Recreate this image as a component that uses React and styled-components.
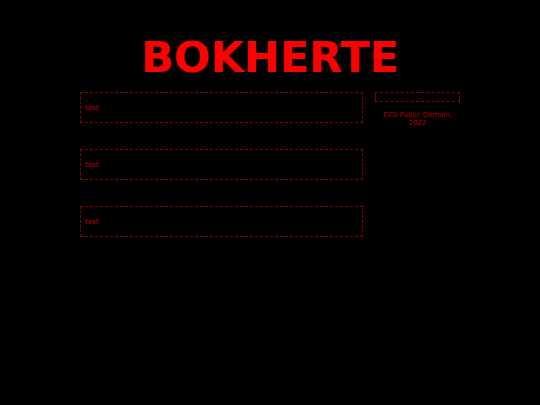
import React from 'react';
import styled, { createGlobalStyle } from 'styled-components';

const GlobalStyle = createGlobalStyle`
  html, body {
    margin: 0;
    padding: 0;
    background: #000;
    font-family: "DejaVu Sans", sans-serif;
  }
`;

const Page = styled.div`
  width: 540px;
  height: 405px;
  background: #000;
  display: flex;
  flex-direction: column;
  align-items: center;
`;

const Title = styled.h1`
  margin: 32px 0 0;
  font-family: "DejaVu Sans", sans-serif;
  font-weight: bold;
  font-size: 43px;
  line-height: 50px;
  color: #ff0000;
  letter-spacing: 0;
`;

const Layout = styled.div`
  margin-top: 10px;
  width: 380px;
  display: flex;
  gap: 12px;
  align-items: flex-start;
`;

const Posts = styled.div`
  width: 283px;
  display: flex;
  flex-direction: column;
  gap: 26px;
`;

const Post = styled.div`
  box-sizing: border-box;
  height: 31px;
  border: 1px dashed #8a0000;
  padding: 0 4px;
  display: flex;
  align-items: center;
  font-size: 7px;
  color: #c00000;
`;

const Sidebar = styled.div`
  width: 85px;
  display: flex;
  flex-direction: column;
  align-items: center;
`;

const SideBox = styled.div`
  box-sizing: border-box;
  width: 100%;
  height: 10px;
  border: 1px dashed #8a0000;
`;

const Credit = styled.p`
  margin: 9px 0 0;
  padding: 0 6px;
  text-align: center;
  font-size: 7px;
  line-height: 8px;
  color: #b80000;
`;

export default function App() {
  const posts = ['test', 'test', 'test'];
  return (
    <Page>
      <GlobalStyle />
      <Title>BOKHERTE</Title>
      <Layout>
        <Posts>
          {posts.map((p, i) => (
            <Post key={i}>{p}</Post>
          ))}
        </Posts>
        <Sidebar>
          <SideBox />
          <Credit>CC0 Public Domain, 2022</Credit>
        </Sidebar>
      </Layout>
    </Page>
  );
}
